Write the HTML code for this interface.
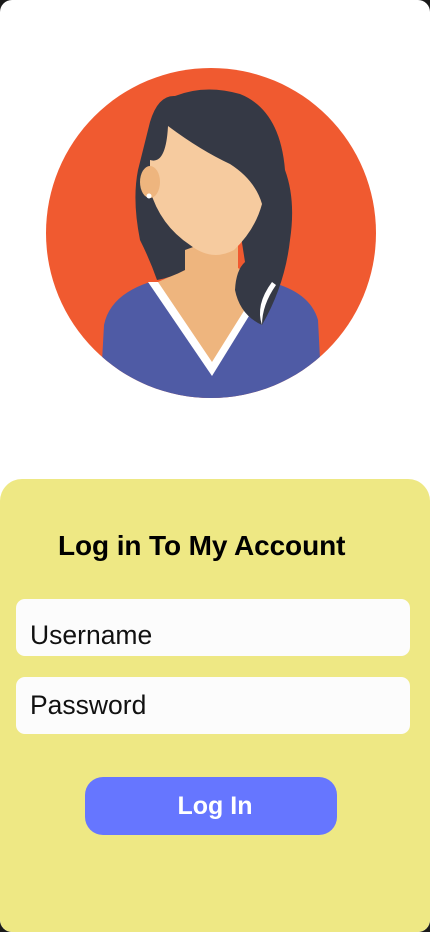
<!DOCTYPE html>
<html><head><meta charset="utf-8"><style>
*{margin:0;padding:0;box-sizing:border-box}
html,body{width:430px;height:932px;background:#1a1a1a;overflow:hidden}
.page{position:absolute;left:0;top:0;width:430px;height:932px;background:#fff;border-radius:12px;overflow:hidden;font-family:"Liberation Sans",Arial,sans-serif}
.card{position:absolute;left:0;top:479px;width:430px;height:453px;background:#eee884;border-radius:22px 22px 12px 12px}
h1{position:absolute;left:58px;top:530px;font-size:28px;font-weight:bold;color:#000;letter-spacing:-0.1px;white-space:nowrap}
.inp{position:absolute;left:16px;width:394px;height:57px;background:#fcfcfc;border-radius:9px;font-size:26.5px;color:#111;padding-left:14px}
.btn{position:absolute;left:85px;top:777px;width:252px;height:58px;background:#6676ff;border-radius:18px;color:#fff;font-size:25px;font-weight:bold;text-align:center;line-height:58px;padding-left:8px}
</style></head><body>
<div class="page">
<svg width="430" height="430" style="position:absolute;left:0;top:0">
<defs><clipPath id="c"><circle cx="211" cy="233" r="165"/></clipPath></defs>
<circle cx="211" cy="233" r="165" fill="#f05a30"/>
<g clip-path="url(#c)">
<path d="M100 398 L104 325 Q110 295 150 282 L270 282 Q310 292 318 320 L322 398 Z" fill="#4f5ba5"/>
<path d="M148 282 L212 376 L270 282 Z" fill="#fff"/>
<path d="M158 282 L212 362 L262 282 Z" fill="#eeb57e"/>
<path d="M185 230 L185 270 L158 282 L262 282 L238 268 L238 230 Z" fill="#eeb57e"/>
<path d="M150 122 Q158 95 175 96 Q205 84 240 94 Q280 110 285 170 Q296 200 290 240 Q285 285 262 325 Q240 315 235 290 Q236 270 245 262 L240 230 L185 250 L185 270 Q170 278 157 280 Q150 260 140 240 Q132 200 138 170 Z" fill="#353945"/>
<path d="M168 126 Q166 165 150 160 L150 190 Q160 225 190 245 Q212 262 234 250 Q255 230 262 204 Q255 180 230 164 Q200 150 168 126 Z" fill="#f6cb9f"/>
<ellipse cx="150" cy="182" rx="10" ry="16" fill="#eeb57e"/>
<circle cx="149" cy="196" r="2.5" fill="#fff"/>
<path d="M262 325 Q255 305 272 282 L276 285 Q262 305 262 325 Z" fill="#fff"/>
</g>
</svg>
<div class="card"></div>
<h1>Log in To My Account</h1>
<div class="inp" style="top:599px;padding-top:21px">Username</div>
<div class="inp" style="top:677px;padding-top:13px">Password</div>
<div class="btn">Log In</div>
</div>
</body></html>
